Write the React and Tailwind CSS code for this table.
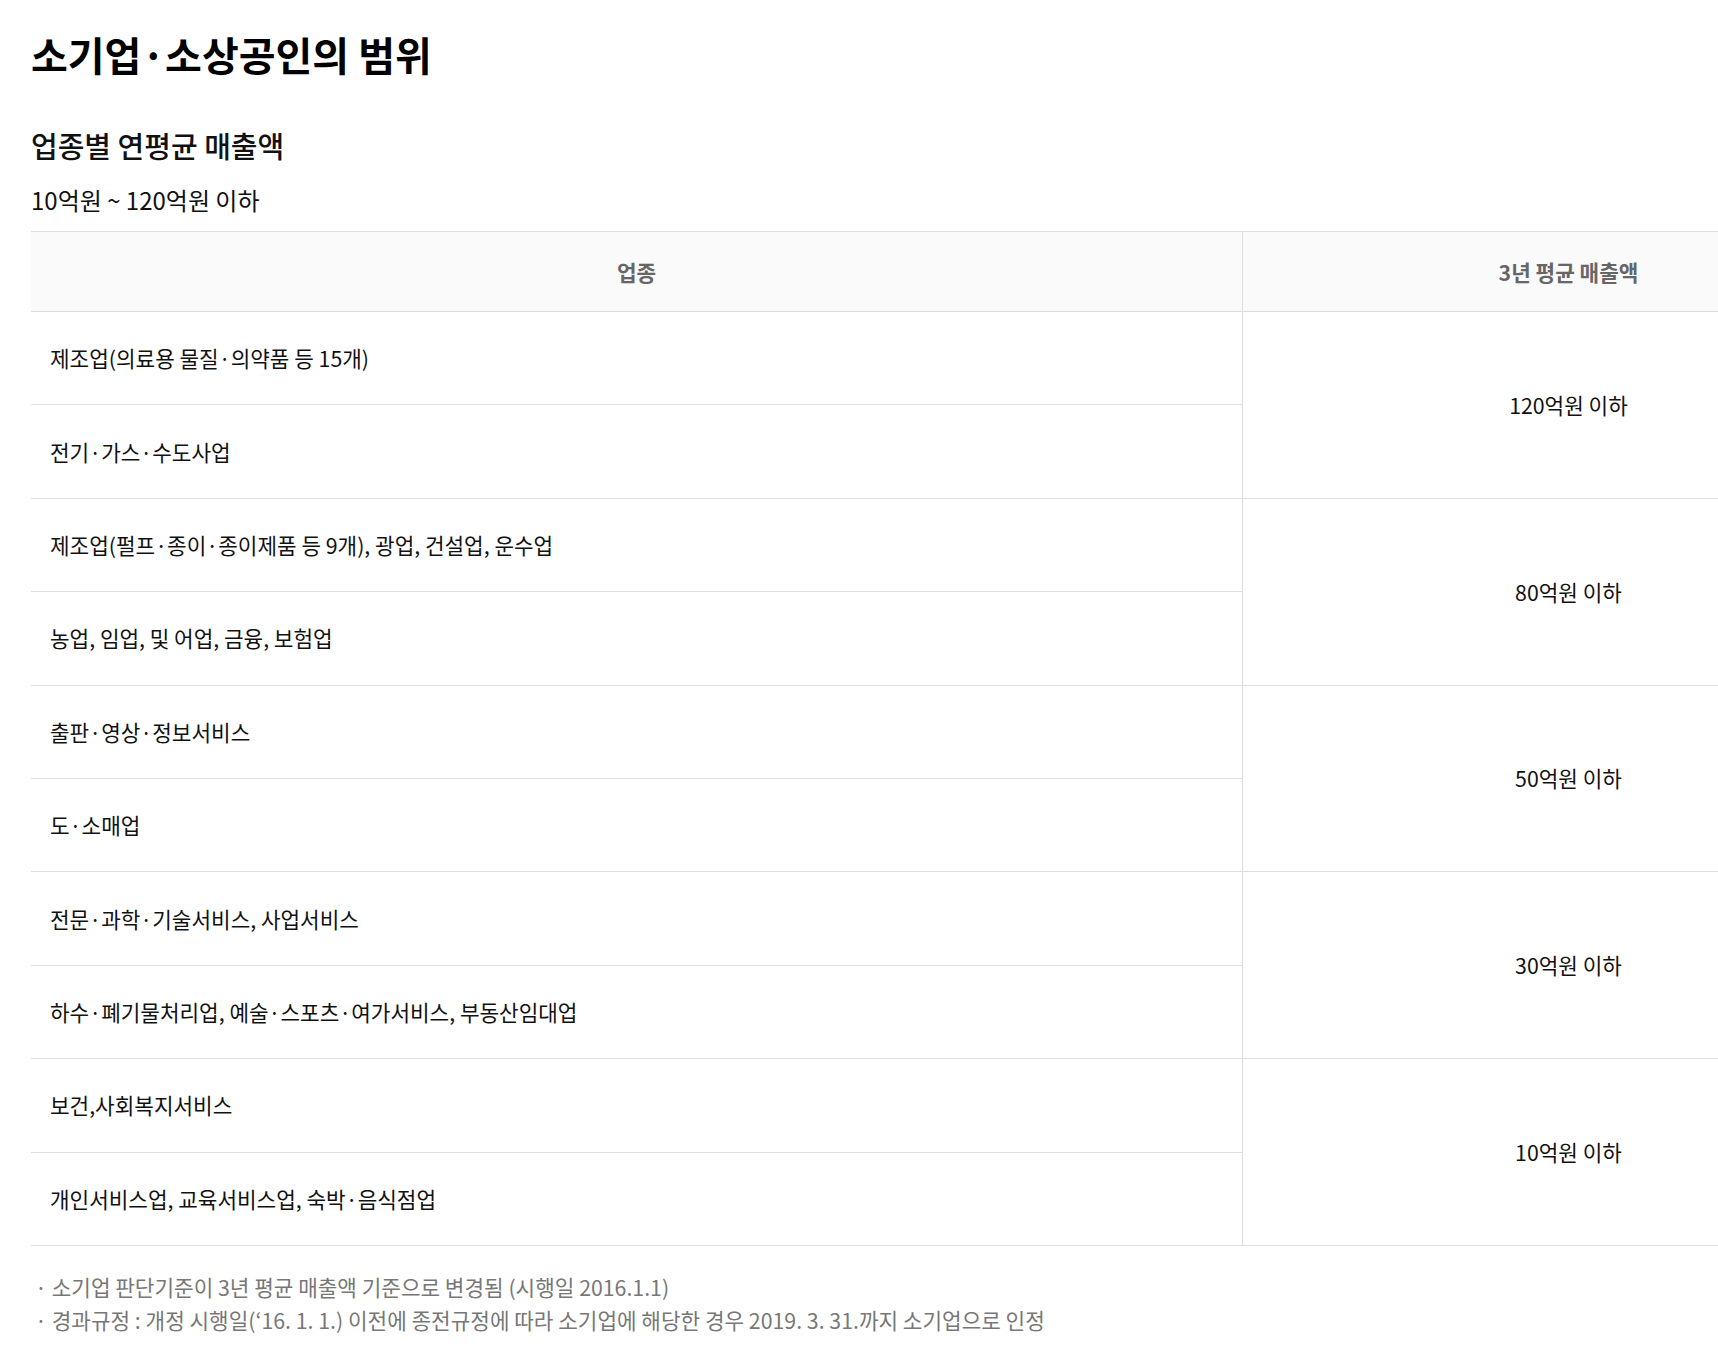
const groups = [
  {
    amount: "120억원 이하",
    items: ["제조업(의료용 물질·의약품 등 15개)", "전기·가스·수도사업"],
  },
  {
    amount: "80억원 이하",
    items: ["제조업(펄프·종이·종이제품 등 9개), 광업, 건설업, 운수업", "농업, 임업, 및 어업, 금융, 보험업"],
  },
  {
    amount: "50억원 이하",
    items: ["출판·영상·정보서비스", "도·소매업"],
  },
  {
    amount: "30억원 이하",
    items: ["전문·과학·기술서비스, 사업서비스", "하수·폐기물처리업, 예술·스포츠·여가서비스, 부동산임대업"],
  },
  {
    amount: "10억원 이하",
    items: ["보건,사회복지서비스", "개인서비스업, 교육서비스업, 숙박·음식점업"],
  },
];

const notes = [
  "· 소기업 판단기준이 3년 평균 매출액 기준으로 변경됨 (시행일 2016.1.1)",
  "· 경과규정 : 개정 시행일(‘16. 1. 1.) 이전에 종전규정에 따라 소기업에 해당한 경우 2019. 3. 31.까지 소기업으로 인정",
];

export default function App() {
  return (
    <div
      className="w-full min-h-[1346px] overflow-hidden bg-white text-[#111]"
      style={{ fontFamily: '"Noto Sans CJK KR", "Noto Sans", sans-serif' }}
    >
      <div className="pl-[31px] pt-[29px]">
        {/* TITLE */}
        <h1 className="text-[40px] leading-[50px] font-bold text-black">
          소기업·소상공인의 범위
        </h1>
        <h2 className="mt-[48px] text-[29px] leading-[36px] font-medium text-[#111]">
          업종별 연평균 매출액
        </h2>
        <p className="mt-[22px] text-[24px] leading-[30px] text-[#111]">
          10억원 ~ 120억원 이하
        </p>

        {/* TABLE */}
        <div className="mt-[16px] w-[1863px] text-[21.3px]">
          <div className="flex h-[81px] border-y border-[#dddddd] bg-[#fafafa] font-bold text-[#666]">
            <div className="w-[65%] flex items-center justify-center">업종</div>
            <div className="w-[35%] flex items-center justify-center border-l border-[#dddddd]">
              3년 평균 매출액
            </div>
          </div>

          {groups.map((g) => (
            <div key={g.amount} className="flex border-b border-[#dddddd]">
              <div className="w-[65%]">
                {g.items.map((item, i) => (
                  <div
                    key={item}
                    className={`flex items-center pl-[19px] text-[#111] ${
                      i === 0 ? "h-[93.4px] border-b border-[#dddddd]" : "h-[92.4px]"
                    }`}
                  >
                    {item}
                  </div>
                ))}
              </div>
              <div className="w-[35%] flex items-center justify-center border-l border-[#dddddd] text-[#111]">
                {g.amount}
              </div>
            </div>
          ))}
        </div>

        {/* NOTES */}
        <div className="mt-[24px] pl-[4px] text-[21.3px] leading-[33px] text-[#777]">
          {notes.map((n) => (
            <p key={n}>{n}</p>
          ))}
        </div>
      </div>
    </div>
  );
}
